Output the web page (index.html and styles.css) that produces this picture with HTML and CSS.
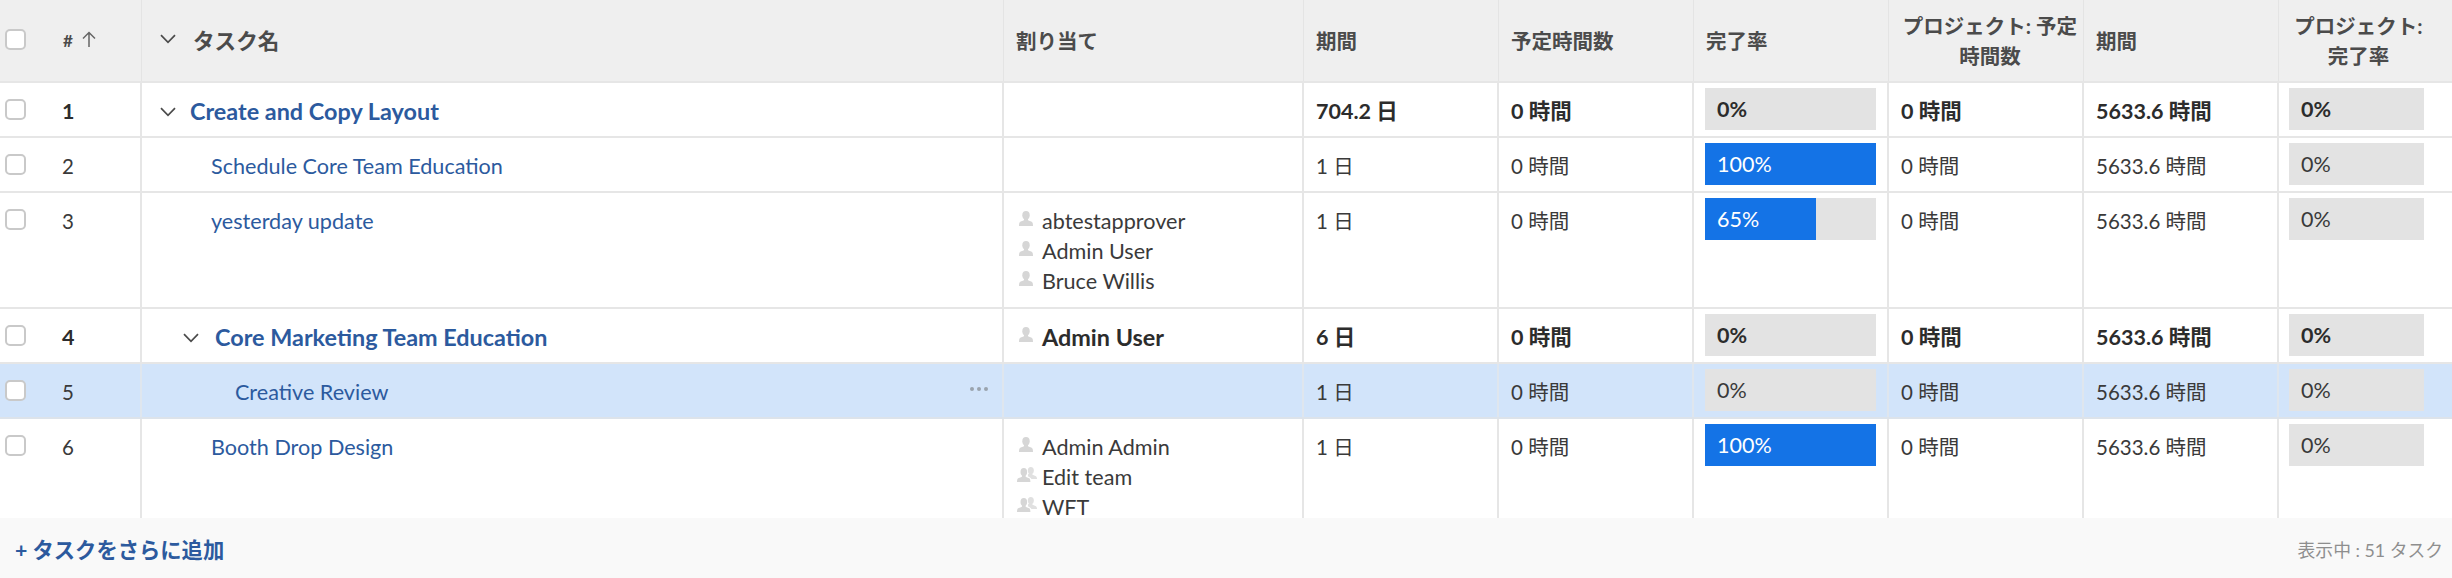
FILE: index.html
```html
<!DOCTYPE html>
<html lang="ja">
<head>
<meta charset="utf-8">
<title>タスク</title>
<link rel="stylesheet" href="styles.css">
</head>
<body>
<svg class="defs" width="0" height="0" aria-hidden="true">
  <defs>
    <symbol id="chev" viewBox="0 0 16 10"><path d="M1 1.2 8 8.400 15 1.200" fill="none" stroke="#4b4b4b" stroke-width="1.700"/></symbol>
    <symbol id="up" viewBox="0 0 14 16"><path d="M7 16V1.500M1 7.500 7 1.500l6 6" fill="none" stroke="#666" stroke-width="1.500"/></symbol>
    <symbol id="person" viewBox="0 0 14 15"><ellipse cx="7" cy="4.200" rx="3.700" ry="4.200" fill="#d6d6d6"/><path d="M5 7.500h4v1.600c0 .7 3.400 1.200 4.400 2.400.4.500.6 2 .6 3.500H0c0-1.500.2-3 .6-3.500C1.600 10.300 5 9.800 5 9.100z" fill="#d6d6d6"/></symbol>
    <symbol id="team" viewBox="0 0 20 15"><ellipse cx="13.800" cy="3.500" rx="3" ry="3.500" fill="#e0e0e0"/><path d="M12.300 6h3v1.400c0 .5 2.600.9 3.700 1.900.5.500 1 1.500 1 2.700h-5.500c-.8-1.500-3-2.400-3.500-2.800V7.600z" fill="#e0e0e0"/><ellipse cx="6.800" cy="5" rx="3.300" ry="3.900" fill="#d6d6d6"/><path d="M5 8h3.600v1.500c0 .7 3 1 4 2.100.4.500.8 1.900.8 3.400H0c0-1.500.4-2.900.8-3.400 1-1.100 4.200-1.400 4.200-2.100z" fill="#d6d6d6"/></symbol>
  </defs>
</svg>

<div class="sheet">
  <div class="row head">
    <div class="cell idx"><span class="check"></span><span class="num">#</span><svg class="up"><use href="#up"/></svg></div>
    <div class="cell name"><svg class="chev"><use href="#chev"/></svg><span>タスク名</span></div>
    <div class="cell">割り当て</div>
    <div class="cell">期間</div>
    <div class="cell">予定時間数</div>
    <div class="cell">完了率</div>
    <div class="cell two">プロジェクト: 予定<br>時間数</div>
    <div class="cell">期間</div>
    <div class="cell two">プロジェクト:<br>完了率</div>
  </div>

  <div class="body">
    <div class="row strong">
      <div class="cell idx"><span class="check"></span><span class="num">1</span></div>
      <div class="cell name l1"><svg class="chev"><use href="#chev"/></svg><a>Create and Copy Layout</a></div>
      <div class="cell"></div>
      <div class="cell">704.2 日</div>
      <div class="cell">0 時間</div>
      <div class="cell barcell"><div class="bar"><span class="label">0%</span></div></div>
      <div class="cell">0 時間</div>
      <div class="cell">5633.6 時間</div>
      <div class="cell barcell last"><div class="bar"><span class="label">0%</span></div></div>
    </div>

    <div class="row">
      <div class="cell idx"><span class="check"></span><span class="num">2</span></div>
      <div class="cell name l2"><a>Schedule Core Team Education</a></div>
      <div class="cell"></div>
      <div class="cell">1 日</div>
      <div class="cell">0 時間</div>
      <div class="cell barcell"><div class="bar"><div class="fill" style="width:100%"></div><span class="label on">100%</span></div></div>
      <div class="cell">0 時間</div>
      <div class="cell">5633.6 時間</div>
      <div class="cell barcell last"><div class="bar"><span class="label">0%</span></div></div>
    </div>

    <div class="row tall">
      <div class="cell idx"><span class="check"></span><span class="num">3</span></div>
      <div class="cell name l2"><a>yesterday update</a></div>
      <div class="cell people">
        <div class="who"><svg class="ico"><use href="#person"/></svg>abtestapprover</div>
        <div class="who"><svg class="ico"><use href="#person"/></svg>Admin User</div>
        <div class="who"><svg class="ico"><use href="#person"/></svg>Bruce Willis</div>
      </div>
      <div class="cell">1 日</div>
      <div class="cell">0 時間</div>
      <div class="cell barcell"><div class="bar"><div class="fill" style="width:65%"></div><span class="label on">65%</span></div></div>
      <div class="cell">0 時間</div>
      <div class="cell">5633.6 時間</div>
      <div class="cell barcell last"><div class="bar"><span class="label">0%</span></div></div>
    </div>

    <div class="row strong">
      <div class="cell idx"><span class="check"></span><span class="num">4</span></div>
      <div class="cell name l3"><svg class="chev"><use href="#chev"/></svg><a>Core Marketing Team Education</a></div>
      <div class="cell people">
        <div class="who"><svg class="ico"><use href="#person"/></svg>Admin User</div>
      </div>
      <div class="cell">6 日</div>
      <div class="cell">0 時間</div>
      <div class="cell barcell"><div class="bar"><span class="label">0%</span></div></div>
      <div class="cell">0 時間</div>
      <div class="cell">5633.6 時間</div>
      <div class="cell barcell last"><div class="bar"><span class="label">0%</span></div></div>
    </div>

    <div class="row selected">
      <div class="cell idx"><span class="check"></span><span class="num">5</span></div>
      <div class="cell name l4"><a>Creative Review</a><span class="more"><i></i><i></i><i></i></span></div>
      <div class="cell"></div>
      <div class="cell">1 日</div>
      <div class="cell">0 時間</div>
      <div class="cell barcell"><div class="bar"><span class="label">0%</span></div></div>
      <div class="cell">0 時間</div>
      <div class="cell">5633.6 時間</div>
      <div class="cell barcell last"><div class="bar"><span class="label">0%</span></div></div>
    </div>

    <div class="row tall">
      <div class="cell idx"><span class="check"></span><span class="num">6</span></div>
      <div class="cell name l2"><a>Booth Drop Design</a></div>
      <div class="cell people">
        <div class="who"><svg class="ico"><use href="#person"/></svg>Admin Admin</div>
        <div class="who"><svg class="ico wide"><use href="#team"/></svg>Edit team</div>
        <div class="who"><svg class="ico wide"><use href="#team"/></svg>WFT</div>
      </div>
      <div class="cell">1 日</div>
      <div class="cell">0 時間</div>
      <div class="cell barcell"><div class="bar"><div class="fill" style="width:100%"></div><span class="label on">100%</span></div></div>
      <div class="cell">0 時間</div>
      <div class="cell">5633.6 時間</div>
      <div class="cell barcell last"><div class="bar"><span class="label">0%</span></div></div>
    </div>
  </div>

  <div class="foot">
    <a class="add">+ タスクをさらに追加</a>
    <span class="count">表示中 : 51 タスク</span>
  </div>
</div>
</body>
</html>
```
FILE: styles.css
```css
* { box-sizing: border-box; }
html, body { margin: 0; padding: 0; background: #fff; }
body {
  font-family: Lato, "Noto Sans CJK JP", sans-serif;
  font-size: 20.500px;
  line-height: 30px;
  color: #3a3a3a;
}
.defs { position: absolute; }
.sheet { width: 2452px; height: 578px; display: flex; flex-direction: column; overflow: hidden; }
.body { height: 435px; overflow: hidden; }
.row {
  display: grid;
  grid-template-columns: 142px 862px 300px 195px 195px 195px 195px 195px 173px;
  height: 55px;
  border-bottom: 2px solid #e6e6e6;
}
.row.tall { height: 116px; }
.cell {
  border-right: 2px solid #e6e6e6;
  padding: 13px 12px 0 12px;
  min-width: 0;
}
.cell:last-child { border-right: 0; }

.head {
  height: 83px;
  background: #efefef;
  font-weight: 700;
  font-size: 20.500px;
  color: #4b4b4b;
}
.head .cell {
  display: flex;
  align-items: center;
  padding-top: 0;
  border-right-width: 1px;
  border-right-color: #e4e4e4;
}
.head .two { justify-content: center; text-align: center; padding: 0 0 0 8px; line-height: 30px; }
.head .two:last-child { padding: 0 14px 0 0; }
.head .idx { padding-top: 0; }
.head .check { background: #fff; margin-top: -3px; }
.head .num { font-size: 17px; margin: 0 9px 0 37px; }
.up { width: 14px; height: 16px; flex: none; margin-top: -4px; }
.head .name { padding-left: 18px; }
.head .name span { margin-left: 17px; }
.head .chev { margin-top: -4px; }

.idx { display: flex; align-items: flex-start; padding-left: 5px; padding-top: 13px; }
.check {
  width: 21px;
  height: 21px;
  flex: none;
  border: 2px solid #c9c9c9;
  border-radius: 5px;
  background: #fff;
  margin-top: 3px;
}
.num { margin-left: 36px; }

.name { display: flex; align-items: flex-start; position: relative; font-size: 21.600px; }
.name a { color: #2c5a9e; }
.chev { width: 16px; height: 10px; flex: none; }
.l1 { padding-left: 18px; }
.l1 .chev { margin-top: 11px; }
.l1 a { margin-left: 14px; }
.l2 { padding-left: 69px; }
.l3 { padding-left: 41px; }
.l3 .chev { margin-top: 11px; }
.l3 a { margin-left: 16px; }
.l4 { padding-left: 93px; }

.more { position: absolute; right: 14px; top: 23px; display: flex; gap: 3px; }
.more i { width: 4px; height: 4px; border-radius: 50%; background: #9aa3ad; }

.people { padding-left: 15px; font-size: 21.600px; }
.who { display: flex; align-items: center; height: 30px; }
.ico { width: 14px; height: 15px; flex: none; margin-right: 9px; margin-top: -6px; }
.ico.wide { width: 20px; margin-left: -2px; margin-right: 5px; }

.barcell { padding-top: 5px; padding-left: 11px; }
.bar {
  position: relative;
  width: 171px;
  height: 42px;
  background: #e3e3e3;
}
.barcell.last .bar { width: 135px; }
.barcell.last { padding-left: 10px; }
.fill { position: absolute; left: 0; top: 0; bottom: 0; background: #1473e6; }
.label { position: absolute; left: 12px; top: 6px; font-size: 21.500px; }
.label.on { color: #fff; }

.strong { font-weight: 700; color: #2c2c2c; font-size: 21.500px; }
.strong .name, .strong .people { font-size: 23.400px; }
.selected, .selected .cell { background: #d2e4fa; }
.selected .cell { border-right-color: #dfe6ee; }
.selected { border-bottom-color: #dde3ea; }

.foot {
  flex: 1;
  display: flex;
  align-items: center;
  justify-content: space-between;
  background: #f9f9f9;
  padding: 4px 9px 0 15px;
}
.add { color: #2c5a9e; font-weight: 700; font-size: 21.300px; }
.count { color: #8e8e8e; font-size: 17.800px; }
```
